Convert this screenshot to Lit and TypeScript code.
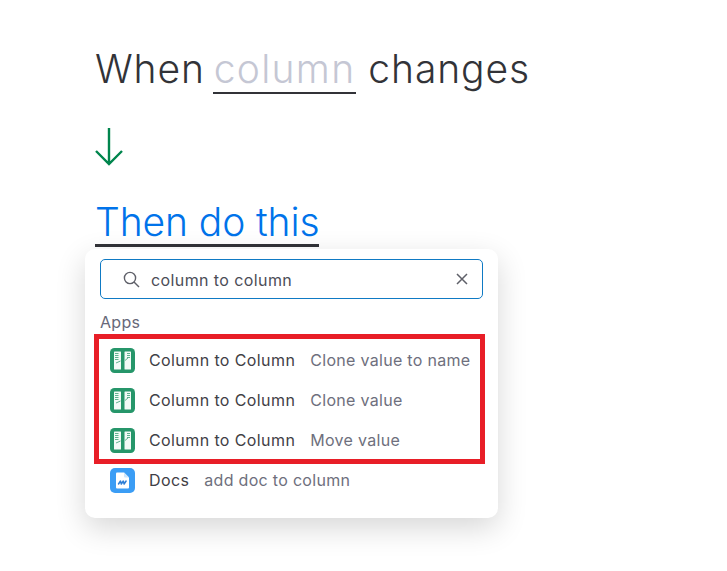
import { LitElement, html, css, svg } from "lit";
import { customElement } from "lit/decorators.js";

const columnIcon = svg`<svg class="icon" viewBox="0 0 25 25" width="25" height="25" aria-hidden="true">
  <rect width="25" height="25" rx="4.5" fill="#26966a"/>
  <rect x="4" y="3.5" width="7" height="18" rx=".5" fill="#f2faf6"/>
  <rect x="14.5" y="3.5" width="6.5" height="18" rx=".5" fill="#f2faf6"/>
  <path d="M5 5.5h3.5M5 7.5h3.5M5 9.5h3.5M5 11.5h3.5M17 5.5h3M17 7.5h3M17 9.5h3" stroke="#5fb28f" stroke-width="1" fill="none"/>
  <path d="M6 15l4.5-2M15 12.5l3.5-3" stroke="#5fb28f" stroke-width="1" fill="none"/>
</svg>`;

const docsIcon = svg`<svg class="icon" viewBox="0 0 25 25" width="25" height="25" aria-hidden="true">
  <rect width="25" height="25" rx="5" fill="#3b9df5"/>
  <path d="M6 5.5a1 1 0 0 1 1-1h7l5 5v10a1 1 0 0 1-1 1H7a1 1 0 0 1-1-1z" fill="#fff"/>
  <path d="M14 4.5v4a1 1 0 0 0 1 1h4" fill="#cfe6fb"/>
  <path d="M8.5 16l2-3 .8 3 2-3 .8 3 2-3" stroke="#2f7fd6" stroke-width="1.5" fill="none" stroke-linecap="round" stroke-linejoin="round"/>
</svg>`;

@customElement("app-root")
export class AppRoot extends LitElement {
  static styles = css`
    :host {
      display: block;
      width: 727px;
      height: 571px;
      background: #fff;
      overflow: hidden;
      font-family: "Inter", "Liberation Sans", sans-serif;
      position: relative;
    }
    .page {
      padding: 45px 0 0 85px;
      display: flex;
      flex-direction: column;
      align-items: flex-start;
    }
    .heading {
      margin: 0 0 0 10px;
      font-family: "Inter", sans-serif;
      font-weight: 300;
      font-size: 39px;
      letter-spacing: 0.9px;
      line-height: 48px;
      height: 49px;
      color: #323338;
      white-space: nowrap;
    }
    .slot {
      display: inline-block;
      height: 47px;
      margin-left: -4px;
      border-bottom: 2px solid #323338;
      color: #c5c7d4;
      letter-spacing: 1.3px;
      padding: 0 1px;
    }
    .arrow {
      display: block;
      margin: 33px 0 0 10px;
    }
    .then {
      margin: 32px 0 0 10px;
      font-family: "Inter", sans-serif;
      font-weight: 300;
      font-size: 39px;
      letter-spacing: -0.1px;
      line-height: 45px;
      height: 45px;
      color: #0073ea;
      border-bottom: 3px solid #323338;
      white-space: nowrap;
    }
    .popup {
      box-sizing: border-box;
      margin-top: 2px;
      width: 413px;
      height: 269px;
      padding: 10px 15px 0;
      border-radius: 10px;
      background: #fff;
      box-shadow: 0 10px 30px rgba(0, 0, 0, 0.16);
    }
    .search {
      box-sizing: border-box;
      width: 383px;
      height: 40px;
      display: flex;
      align-items: center;
      padding: 0 14px 0 22px;
      border: 1px solid #0f7ac4;
      border-radius: 5px;
      font-size: 16px;
      letter-spacing: 0.4px;
      color: #4b4d57;
    }
    .search .q {
      flex: 1;
      margin-left: 11px;
      padding-top: 2px;
    }
    .label {
      margin-top: 12px;
      height: 22px;
      line-height: 22px;
      font-size: 16px;
      letter-spacing: 0.3px;
      color: #676879;
    }
    .rows {
      margin-top: 7px;
      display: flex;
      flex-direction: column;
    }
    .row {
      height: 40px;
      display: flex;
      align-items: center;
      padding-left: 10px;
      font-size: 16px;
      letter-spacing: 0.4px;
      white-space: nowrap;
    }
    .icon {
      flex: none;
      margin-right: 14px;
    }
    .name {
      color: #3f4046;
      margin-right: 15px;
    }
    .sub {
      color: #6e6f7d;
      letter-spacing: 0.3px;
    }
    .mark {
      position: absolute;
      box-sizing: border-box;
      left: 94px;
      top: 334px;
      width: 391px;
      height: 130px;
      border: 5px solid #e81e27;
      pointer-events: none;
    }
  `;

  private row(icon: unknown, name: string, sub: string) {
    return html`<div class="row">${icon}<span class="name">${name}</span><span class="sub">${sub}</span></div>`;
  }

  render() {
    return html`
      <div class="page">
        <h1 class="heading">When <span class="slot">column</span> changes</h1>
        <svg class="arrow" width="28" height="40" viewBox="0 0 28 40" fill="none" stroke="#00854d" stroke-width="2.4" aria-hidden="true">
          <path d="M14 1v36M1 24l13 13 13-13"/>
        </svg>
        <div class="then">Then do this</div>
        <div class="popup">
          <div class="search">
            <svg width="17" height="17" viewBox="0 0 17 17" fill="none" stroke="#5f6069" stroke-width="1.4" aria-hidden="true">
              <circle cx="7" cy="7" r="5.6"/><path d="M11 11l5 5"/>
            </svg>
            <span class="q">column to column</span>
            <svg width="12" height="12" viewBox="0 0 12 12" fill="none" stroke="#5f6069" stroke-width="1.5" aria-hidden="true">
              <path d="M1 1l10 10M11 1L1 11"/>
            </svg>
          </div>
          <div class="label">Apps</div>
          <div class="rows">
            ${this.row(columnIcon, "Column to Column", "Clone value to name")}
            ${this.row(columnIcon, "Column to Column", "Clone value")}
            ${this.row(columnIcon, "Column to Column", "Move value")}
            ${this.row(docsIcon, "Docs", "add doc to column")}
          </div>
        </div>
      </div>
      <div class="mark"></div>
    `;
  }
}
